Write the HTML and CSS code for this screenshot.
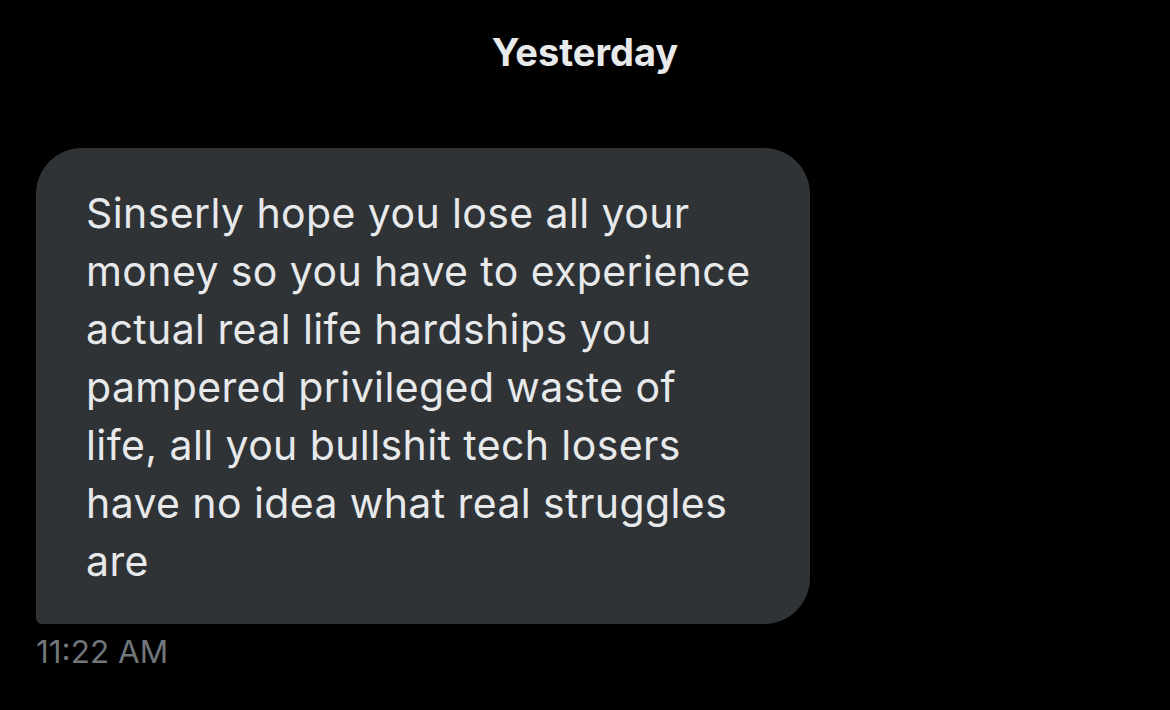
FILE: index.html
```html
<!DOCTYPE html>
<html lang="en">
<head>
  <meta charset="UTF-8">
  <meta name="viewport" content="width=device-width, initial-scale=1.0">
  <title>Messages</title>
  <link rel="stylesheet" href="styles.css">
</head>
<body>

  <div class="chat">
    <div class="day">Yesterday</div>

    <!-- received message -->
    <div class="msg">
      <div class="bubble">Sinserly hope you lose all your<br>money so you have to experience<br>actual real life hardships you<br>pampered privileged waste of<br>life, all you bullshit tech losers<br>have no idea what real struggles<br>are</div>
      <div class="time">11:22 AM</div>
    </div>
  </div>

</body>
</html>
```

FILE: styles.css
```css
* {
  margin: 0;
  padding: 0;
  box-sizing: border-box;
}
body {
  font-family: 'Inter', 'Noto Sans', sans-serif;
  background-color: #000;
  height: 100vh;
  overflow: hidden;
}
.chat {
  padding: 28px 36px 0;
}
.day {
  text-align: center;
  color: #e7e9ea;
  font-weight: 700;
  font-size: 38px;
  line-height: 48px;
}
.msg {
  margin-top: 72px;
  display: flex;
  flex-direction: column;
  align-items: flex-start;
}
.bubble {
  width: 774px;
  background-color: #2f3336;
  color: #e7e9ea;
  font-size: 41px;
  letter-spacing: 0.4px;
  line-height: 58px;
  padding: 36px 40px 34px 50px;
  border-radius: 46px 46px 46px 6px;
}
.time {
  margin-top: 10px;
  color: #71767b;
  font-size: 31.5px;
  line-height: 36px;
}
```
